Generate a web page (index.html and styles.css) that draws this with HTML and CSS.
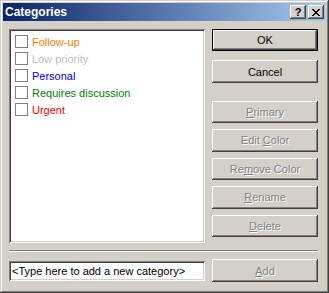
FILE: index.html
```html
<!DOCTYPE html>
<html>
  <head>
    <title>Categories</title>
    <link rel="stylesheet" href="styles.css">
  </head>
  <body>
    <div class="window">
      <div class="titlebar">
        <span class="caption">Categories</span>
        <div class="capbtns">
          <span class="capbtn help">?</span>
          <span class="capbtn close">
            <svg width="8" height="7" viewBox="0 0 8 7" shape-rendering="crispEdges">
              <path d="M0 0h2v1h-2zM6 0h2v1h-2zM1 1h2v1h-2zM5 1h2v1h-2zM2 2h4v1h-4zM3 3h2v1h-2zM2 4h4v1h-4zM1 5h2v1h-2zM5 5h2v1h-2zM0 6h2v1h-2zM6 6h2v1h-2z" fill="#000"/>
            </svg>
          </span>
        </div>
      </div>

      <div class="client">
        <div class="top">
          <div class="listbox">
            <div class="item"><span class="check"></span><span class="orange">Follow-up</span></div>
            <div class="item"><span class="check"></span><span class="silver">Low priority</span></div>
            <div class="item"><span class="check"></span><span class="blue">Personal</span></div>
            <div class="item"><span class="check"></span><span class="green">Requires discussion</span></div>
            <div class="item"><span class="check"></span><span class="red">Urgent</span></div>
          </div>
          <div class="buttons">
            <button class="btn default ok">OK</button>
            <button class="btn cancel">Cancel</button>
            <button class="btn" disabled><u>P</u>rimary</button>
            <button class="btn" disabled>Edit <u>C</u>olor</button>
            <button class="btn" disabled>Re<u>m</u>ove Color</button>
            <button class="btn" disabled><u>R</u>ename</button>
            <button class="btn" disabled><u>D</u>elete</button>
          </div>
        </div>

        <div class="sep"></div>

        <div class="bottom">
          <div class="field">&lt;Type here to add a new category&gt;</div>
          <button class="btn" disabled><u>A</u>dd</button>
        </div>
      </div>
    </div>
  </body>
</html>
```

FILE: styles.css
```css
* {
  box-sizing: border-box;
}

body {
  margin: 0;
  background: #d4d0c8;
  font-family: "Liberation Sans", Arial, sans-serif;
  font-size: 11px;
}

.window {
  width: 329px;
  height: 293px;
  padding: 3px;
  background: #d4d0c8;
  display: flex;
  flex-direction: column;
  box-shadow: inset -1px -1px 0 #404040, inset 1px 1px 0 #d4d0c8,
    inset -2px -2px 0 #808080, inset 2px 2px 0 #fff;
}

.titlebar {
  height: 18px;
  padding: 0 2px;
  display: flex;
  align-items: center;
  justify-content: space-between;
  background: linear-gradient(to right, #0a246a, #a6caf0);
}

.caption {
  color: #fff;
  font-weight: bold;
  font-size: 12px;
}

.capbtns {
  display: flex;
  gap: 2px;
}

.capbtn {
  width: 16px;
  height: 14px;
  display: flex;
  align-items: center;
  justify-content: center;
  background: #d4d0c8;
  box-shadow: inset -1px -1px 0 #404040, inset 1px 1px 0 #fff,
    inset -2px -2px 0 #808080, inset 2px 2px 0 #d4d0c8;
}

.help {
  font-weight: bold;
  font-size: 11px;
  line-height: 14px;
}

.client {
  flex: 1;
  padding: 8px 8px 8px 6px;
  display: flex;
  flex-direction: column;
}

.top {
  display: flex;
  gap: 7px;
  height: 214px;
}

.listbox {
  width: 196px;
  padding: 4px 4px 0 6px;
  background: #fff;
  box-shadow: inset 1px 1px 0 #808080, inset -1px -1px 0 #fff,
    inset 2px 2px 0 #404040, inset -2px -2px 0 #d4d0c8;
}

.item {
  height: 17px;
  display: flex;
  align-items: center;
  gap: 4px;
}

.check {
  width: 13px;
  height: 13px;
  border: 1px solid #808080;
  background: #fff;
}

.orange { color: #ff8000; }
.silver { color: #c0c0c0; }
.blue { color: #0000ff; }
.green { color: #008000; }
.red { color: #ff0000; }

.buttons {
  width: 106px;
  display: flex;
  flex-direction: column;
}

.btn {
  width: 106px;
  height: 23px;
  margin: 0 0 6px 0;
  padding: 0;
  border: 0;
  background: #d4d0c8;
  color: #000;
  font-family: "Liberation Sans", Arial, sans-serif;
  font-size: 11px;
  box-shadow: inset -1px -1px 0 #404040, inset 1px 1px 0 #fff,
    inset -2px -2px 0 #808080, inset 2px 2px 0 #d4d0c8;
}

.btn.default {
  box-shadow: inset 0 0 0 1px #000, inset -2px -2px 0 #404040,
    inset 2px 2px 0 #fff, inset -3px -3px 0 #808080;
}

.btn.ok {
  margin-bottom: 9px;
}

.btn.cancel {
  margin-bottom: 18px;
}

.btn:disabled {
  color: #808080;
  text-shadow: 1px 1px 0 #fff;
}

.sep {
  height: 2px;
  margin: 7px 0;
  border-top: 1px solid #808080;
  border-bottom: 1px solid #fff;
}

.bottom {
  display: flex;
  align-items: center;
  gap: 7px;
}

.bottom .btn {
  margin: 0;
}

.field {
  width: 196px;
  height: 20px;
  padding: 0 3px;
  display: flex;
  align-items: center;
  background: #fff;
  box-shadow: inset 1px 1px 0 #808080, inset -1px -1px 0 #fff,
    inset 2px 2px 0 #404040, inset -2px -2px 0 #d4d0c8;
}
```
